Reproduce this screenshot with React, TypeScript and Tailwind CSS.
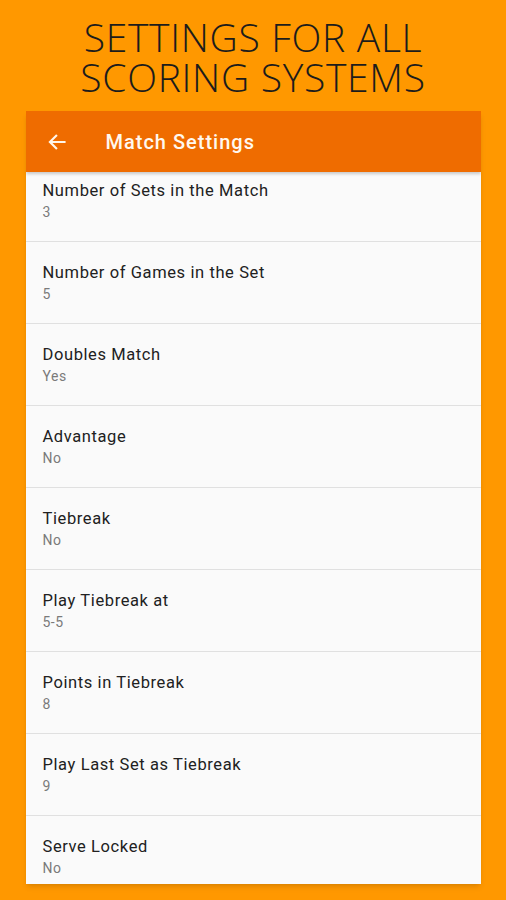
import React from 'react';

const settings = [
  { title: 'Number of Sets in the Match', value: '3' },
  { title: 'Number of Games in the Set', value: '5' },
  { title: 'Doubles Match', value: 'Yes' },
  { title: 'Advantage', value: 'No' },
  { title: 'Tiebreak', value: 'No' },
  { title: 'Play Tiebreak at', value: '5-5' },
  { title: 'Points in Tiebreak', value: '8' },
  { title: 'Play Last Set as Tiebreak', value: '9' },
  { title: 'Serve Locked', value: 'No' },
];

const App: React.FC = () => {
  return (
    <div className="w-[506px] h-[900px] bg-[#ff9800] overflow-hidden flex flex-col items-center font-['Roboto',sans-serif]">
      {/* Headline */}
      <div className="pt-[17px] h-[111px] text-center text-[#1c1c1c] font-['Open_Sans',sans-serif] font-light text-[39px] leading-[40px] tracking-[0.7px]">
        <div>SETTINGS FOR ALL</div>
        <div>SCORING SYSTEMS</div>
      </div>

      {/* Phone screen */}
      <div className="w-[455px] h-[773px] flex flex-col bg-[#fafafa] shadow-md overflow-hidden">
        <div className="h-[61px] shrink-0 bg-[#ef6c00] flex items-center shadow-[0_2px_3px_rgba(0,0,0,0.2)] z-10">
          <svg className="ml-[21px] w-[20px] h-[20px]" viewBox="0 0 24 24" fill="none" stroke="#fff6ea" strokeWidth="2.6" strokeLinecap="square">
            <path d="M21 12H4M11 4.5L3.5 12L11 19.5" />
          </svg>
          <span className="ml-[39px] text-[20px] tracking-[1px] font-medium text-[#fff8ef]">Match Settings</span>
        </div>

        <div className="flex-1 overflow-hidden">
          <div className="-mt-[12px]">
            {settings.map((s, i) => (
              <div
                key={s.title}
                className={`h-[82px] pl-[17px] pt-[20px] ${i < settings.length - 1 ? 'border-b border-[#e0e0e0]' : ''}`}
              >
                <div className="text-[16.5px] leading-[22px] tracking-[0.6px] text-[#212121]">{s.title}</div>
                <div className="text-[14px] leading-[20px] tracking-[0.5px] text-[#7a7a7a]">{s.value}</div>
              </div>
            ))}
          </div>
        </div>
      </div>
    </div>
  );
};

export default App;
